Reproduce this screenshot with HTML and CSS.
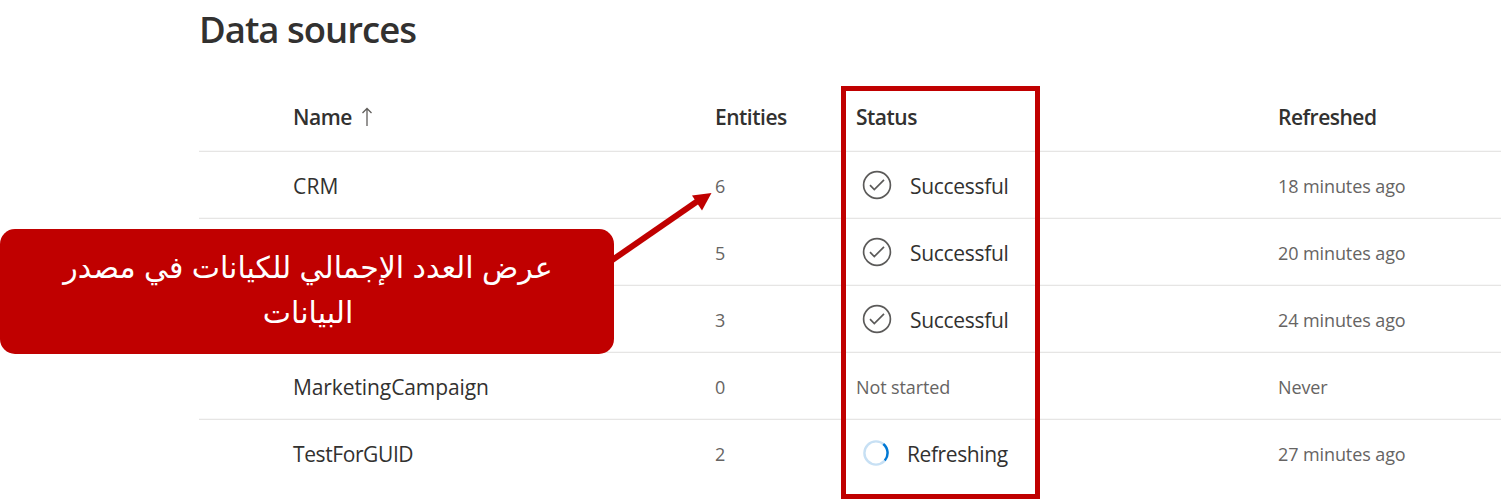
FILE: index.html
```html
<!DOCTYPE html>
<html lang="en">
<head>
<meta charset="utf-8">
<title>Data sources</title>
<link rel="stylesheet" href="styles.css">
</head>
<body>
<svg class="defs" width="0" height="0" aria-hidden="true">
  <symbol id="check" viewBox="0 0 30 30">
    <circle cx="15" cy="15" r="13.4"/>
    <path d="M8 15.2 12.3 19.5 22 9.8"/>
  </symbol>
</svg>
<main class="page">
  <h1 class="title">Data sources</h1>
  <div class="grid">
    <div class="row head">
      <div class="name"><span>Name</span><svg class="sort" viewBox="0 0 12 20"><path d="M6 19V1.5M1.5 6 6 1.5 10.5 6"/></svg></div>
      <div>Entities</div>
      <div>Status</div>
      <div>Refreshed</div>
    </div>
    <div class="row">
      <div class="name crm">CRM</div>
      <div class="small">6</div>
      <div class="status"><svg class="check"><use href="#check"/></svg><span>Successful</span></div>
      <div class="small">18 minutes ago</div>
    </div>
    <div class="row">
      <div class="name"></div>
      <div class="small">5</div>
      <div class="status"><svg class="check"><use href="#check"/></svg><span>Successful</span></div>
      <div class="small">20 minutes ago</div>
    </div>
    <div class="row">
      <div class="name"></div>
      <div class="small">3</div>
      <div class="status"><svg class="check"><use href="#check"/></svg><span>Successful</span></div>
      <div class="small">24 minutes ago</div>
    </div>
    <div class="row">
      <div class="name campaign">MarketingCampaign</div>
      <div class="small">0</div>
      <div class="small">Not started</div>
      <div class="small">Never</div>
    </div>
    <div class="row last">
      <div class="name">TestForGUID</div>
      <div class="small">2</div>
      <div class="status"><svg class="spin" viewBox="0 0 26 26"><circle cx="13" cy="13" r="11.6"/><path d="M20.3 4A11.6 11.6 0 0 1 21.8 20.5"/></svg><span>Refreshing</span></div>
      <div class="small">27 minutes ago</div>
    </div>
  </div>
</main>
<div class="frame"></div>
<svg class="arrow" viewBox="0 0 112 80"><path class="shaft" d="M0 78.500 97 11.500"/><path class="tip" d="M111.500 3 92 5.500 102 20.500Z"/></svg>
<div class="callout" lang="ar" dir="rtl"><span>عرض العدد الإجمالي للكيانات في مصدر</span><span>البيانات</span></div>
</body>
</html>
```
FILE: styles.css
```css
* { box-sizing: border-box; }
body {
  margin: 0;
  position: relative;
  width: 1501px;
  height: 503px;
  overflow: hidden;
  background: #fff;
  color: #323130;
  font-family: "Open Sans", "Noto Sans", sans-serif;
  font-size: 21px;
}
.defs { position: absolute; }
.page { padding: 4px 0 0 199px; }
.title {
  margin: 0;
  height: 80px;
  font-size: 36.5px;
  line-height: 51px;
  font-weight: 600;
  letter-spacing: -1px;
}
.row {
  display: grid;
  grid-template-columns: 422px 141px 422px 1fr;
  align-items: center;
  height: 67px;
  padding: 2px 0 0 94px;
  border-bottom: 1px solid #e6e5e4;
  box-shadow: inset 0 -1px #f8f8f8;
  white-space: nowrap;
  line-height: 30px;
  letter-spacing: -0.4px;
}
.head { height: 68px; padding-top: 0; padding-bottom: 1px; font-weight: 600; letter-spacing: -0.5px; }
.last { border-bottom-color: transparent; box-shadow: none; }
.name { display: flex; align-items: center; }
.crm { letter-spacing: 0.2px; }
.campaign { letter-spacing: -0.1px; }
.sort { width: 12px; height: 20px; margin-left: 9px; fill: none; stroke: #605e5c; stroke-width: 1.3; }
.small { color: #666463; font-size: 18px; letter-spacing: -0.1px; }
.status { display: flex; align-items: center; }
.check { width: 30px; height: 30px; margin: 0 18px 2px 6px; fill: none; stroke: #5b5a59; stroke-width: 1.7; }
.check + span { letter-spacing: -0.3px; }
.spin { width: 26px; height: 26px; margin: 0 18px 2px 7px; fill: none; stroke: #c7e0f4; stroke-width: 2.4; }
.spin path { stroke: #0078d4; }
.frame {
  position: absolute;
  left: 841px;
  top: 86px;
  width: 199px;
  height: 413px;
  border: 5px solid #c00000;
}
.arrow { position: absolute; left: 600px; top: 190px; width: 112px; height: 80px; }
.arrow .shaft { fill: none; stroke: #c00000; stroke-width: 6; }
.arrow .tip { fill: #c00000; }
.callout {
  position: absolute;
  left: 0;
  top: 229px;
  width: 614px;
  height: 125px;
  padding: 0 0 3px 2px;
  border-radius: 15px;
  background: #c00000;
  color: #fff;
  display: flex;
  flex-direction: column;
  align-items: center;
  justify-content: center;
  font-family: "Liberation Sans", "DejaVu Sans", sans-serif;
  font-size: 30px;
  line-height: 45px;
  white-space: nowrap;
}
```
